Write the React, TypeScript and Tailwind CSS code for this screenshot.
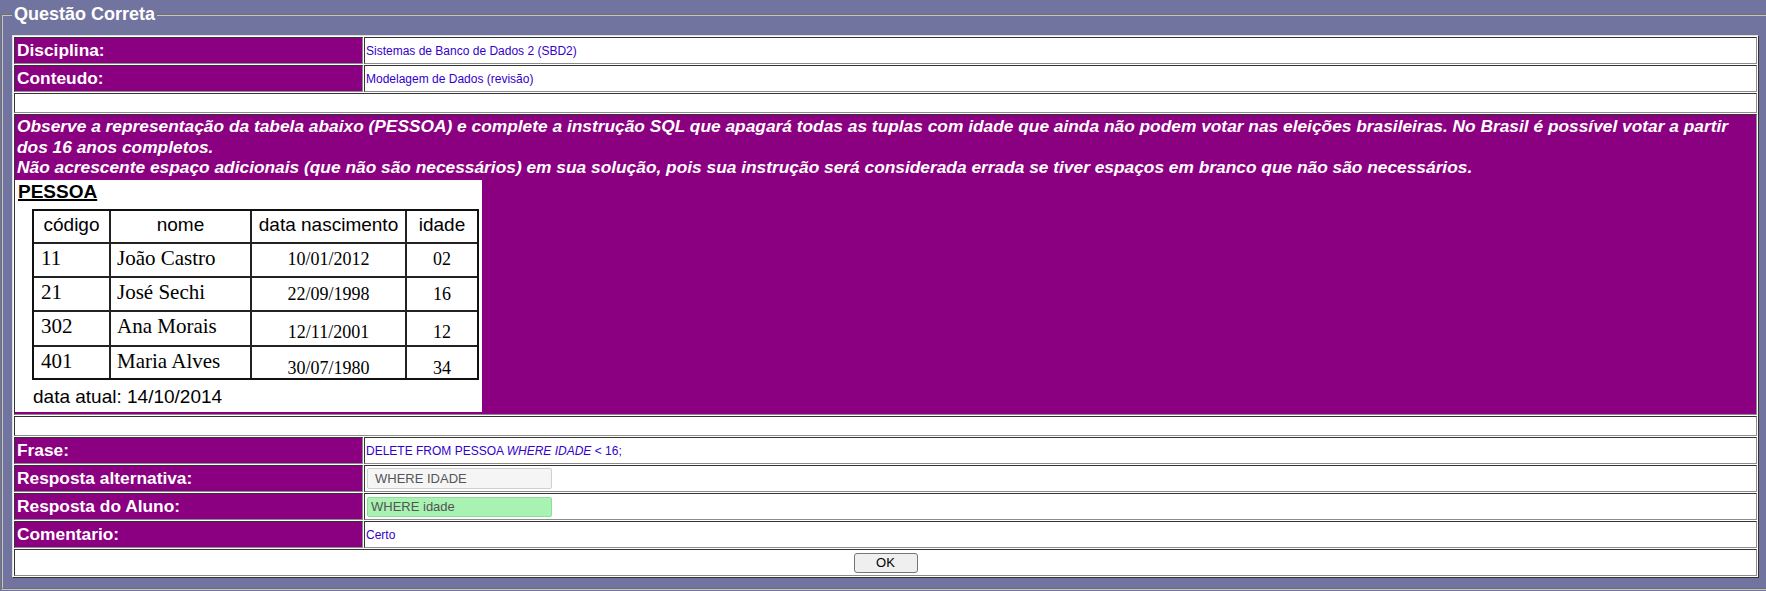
import React from "react";

const sans = "font-['Liberation_Sans',Arial,sans-serif]";
const serif = "font-['Liberation_Serif','Times_New_Roman',serif]";

// inset look of the old html table cells
const cell =
  "border border-t-[#333] border-l-[#333] border-b-[#8c8c8c] border-r-[#8c8c8c]";

const labelCls =
  "w-[349px] shrink-0 h-[27px] bg-[#8b0080] flex items-center pl-[2px] text-white font-bold text-[17.33px]";
const valueCls =
  "flex-1 h-[27px] bg-white flex items-center pl-px text-[12px] text-[#3300cc]";

type Pessoa = {
  codigo: string;
  nome: string;
  nasc: string;
  idade: string;
  pt: string;
};

const pessoas: Pessoa[] = [
  { codigo: "11", nome: "João Castro", nasc: "10/01/2012", idade: "02", pt: "pt-[5px]" },
  { codigo: "21", nome: "José Sechi", nasc: "22/09/1998", idade: "16", pt: "pt-[6px]" },
  { codigo: "302", nome: "Ana Morais", nasc: "12/11/2001", idade: "12", pt: "pt-[10px]" },
  { codigo: "401", nome: "Maria Alves", nasc: "30/07/1980", idade: "34", pt: "pt-[11px]" },
];

const TabelaPessoa: React.FC = () => {
  return (
    <div className={`mt-[2px] w-[467px] h-[232px] bg-white text-black overflow-hidden ${sans}`}>
      <div className="ml-[3px] mt-px text-[19px] font-bold underline decoration-2 leading-[normal]">
        PESSOA
      </div>
      <div className="ml-[17px] mt-[6px] w-[447px] border-2 border-[#111] bg-[#222] grid grid-cols-[75px_139px_153px_70px] grid-rows-[31px_32px_32px_33px_31px] gap-[2px]">
        {["código", "nome", "data nascimento", "idade"].map((h) => (
          <div key={h} className="bg-white flex justify-center pt-[3px] text-[19px] leading-[normal]">
            {h}
          </div>
        ))}
        {pessoas.map((p) => (
          <React.Fragment key={p.codigo}>
            <div className={`bg-white pl-[7px] pt-[2px] text-[21px] leading-[normal] ${serif}`}>
              {p.codigo}
            </div>
            <div className={`bg-white pl-[6px] pt-[2px] text-[21px] leading-[normal] ${serif}`}>
              {p.nome}
            </div>
            <div className={`bg-white flex justify-center text-[18px] leading-[normal] ${p.pt} ${serif}`}>
              {p.nasc}
            </div>
            <div className={`bg-white flex justify-center text-[18px] leading-[normal] ${p.pt} ${serif}`}>
              {p.idade}
            </div>
          </React.Fragment>
        ))}
      </div>
      <div className="ml-[18px] mt-[6px] text-[19px] leading-[normal]">data atual: 14/10/2014</div>
    </div>
  );
};

const Row: React.FC<{ label: string; children?: React.ReactNode; green?: boolean }> = ({
  label,
  children,
  green,
}) => (
  <div className="flex gap-px">
    <div className={`${cell} ${labelCls}`}>{label}</div>
    <div className={`${cell} ${valueCls} ${green ? "bg-[#00e31e]" : ""}`}>{children}</div>
  </div>
);

export default function App() {
  return (
    <div className={`w-[1766px] h-[591px] overflow-hidden bg-[#7274a0] ${sans}`}>
      <fieldset className="mt-[4px] ml-[1px] w-[1770px] border-2 [--tw-border-style:groove] [border-style:groove] border-[#c4c4c4] px-[9px] pt-[10px] pb-[10px]">
        <legend className="px-[2px] text-[18px] font-bold text-white leading-[normal]">
          Questão Correta
        </legend>

        <div className="w-[1747px] border border-t-[#dedede] border-l-[#dedede] border-b-[#333] border-r-[#333] bg-white p-px flex flex-col gap-px">
          <Row label="Disciplina:">Sistemas de Banco de Dados 2 (SBD2)</Row>
          <Row label="Conteudo:">Modelagem de Dados (revisão)</Row>

          <div className={`${cell} h-[20px] bg-white`} />

          <div className={`${cell} h-[301px] bg-[#8b0080] pt-px pr-px pb-px`}>
            <p className="pl-[2px] text-white font-bold italic text-[17.33px] leading-[20.5px]">
              Observe a representação da tabela abaixo (PESSOA) e complete a instrução SQL que
              apagará todas as tuplas com idade que ainda não podem votar nas eleições brasileiras.
              No Brasil é possível votar a partir dos 16 anos completos.
              <br />
              Não acrescente espaço adicionais (que não são necessários) em sua solução, pois sua
              instrução será considerada errada se tiver espaços em branco que não são necessários.
            </p>
            <TabelaPessoa />
          </div>

          <div className={`${cell} h-[20px] bg-white`} />

          <Row label="Frase:">
            <span>
              DELETE FROM PESSOA <i>WHERE IDADE</i> &lt; 16;
            </span>
          </Row>
          <Row label="Resposta alternativa:">
            <input
              readOnly
              value="WHERE IDADE"
              className="ml-px w-[185px] h-[21px] bg-[#f5f5f5] border border-[#cfcfcf] rounded-[2px] pl-[7px] text-[13px] text-[#555] outline-none"
            />
          </Row>
          <Row label="Resposta do Aluno:" green>
            <input
              readOnly
              value="WHERE idade"
              className="ml-px w-[185px] h-[20px] bg-[#a8f2b2] border border-[#8fdc9b] rounded-[2px] pl-[3px] text-[13px] text-[#555] outline-none"
            />
          </Row>
          <Row label="Comentario:">Certo</Row>

          <div className={`${cell} h-[27px] bg-white flex items-center justify-center`}>
            <button className="w-[64px] h-[20px] bg-[#efefef] border border-[#767676] rounded-[3px] text-[13px] text-black leading-none">
              OK
            </button>
          </div>
        </div>
      </fieldset>
    </div>
  );
}
